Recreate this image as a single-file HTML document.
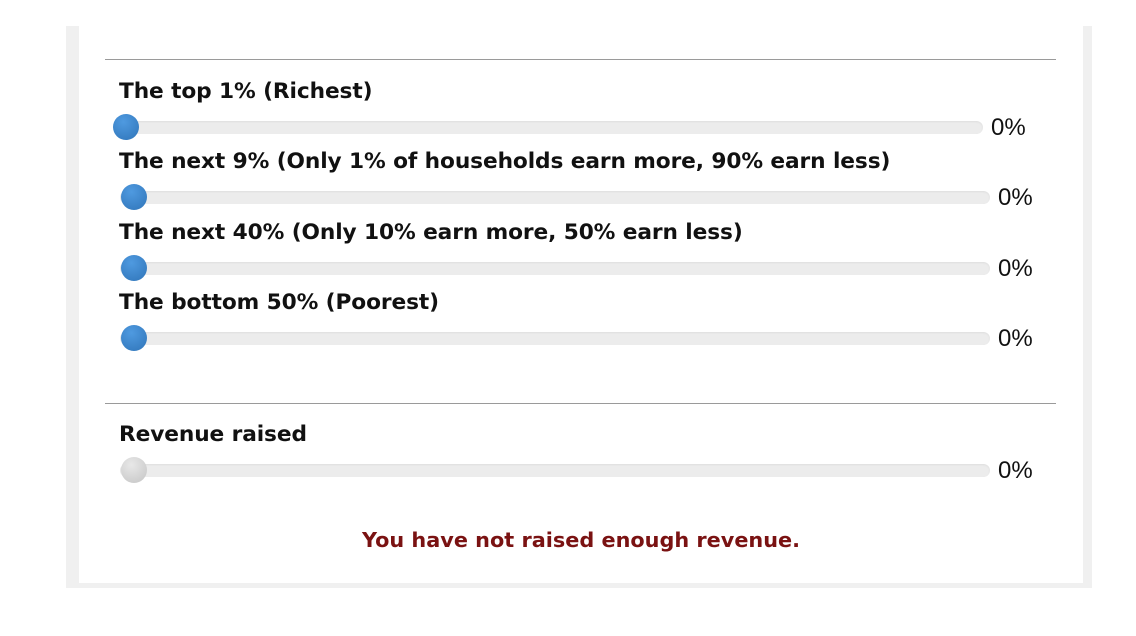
<!DOCTYPE html>
<html><head><style>
body{margin:0;width:1136px;height:636px;background:#fff;position:relative;overflow:hidden;font-family:"DejaVu Sans","Liberation Sans",sans-serif}
.box{position:absolute;left:66px;top:26px;width:1026px;height:562px;background:#f0f0f0}
.in{position:absolute;left:79px;top:26px;width:1004px;height:557px;background:#fff}
.hr{position:absolute;left:105px;width:951px;height:1px;background:#9a9a9a}
.lab{position:absolute;left:119px;font-weight:bold;font-size:21.7px;color:#111;line-height:24px;letter-spacing:-0.1px;white-space:nowrap}
.tr{position:absolute;left:120px;height:13px;border-radius:7px;background:#ececec;box-shadow:inset 0 1px 2px rgba(0,0,0,.06)}
.th{position:absolute;width:26px;height:26px;border-radius:50%;background:radial-gradient(circle at 40% 30%,#4f9ae0,#2f74b8)}
.th.g{background:radial-gradient(circle at 40% 30%,#e8e8e8,#c4c4c4)}
.pc{position:absolute;font-family:"Liberation Sans",sans-serif;font-size:24px;color:#111;line-height:24px}
.msg{position:absolute;left:79px;width:1004px;top:528px;text-align:center;font-weight:bold;font-size:20.8px;color:#7a1212}
</style></head><body>
<div class="box"></div><div class="in"></div>
<div class="hr" style="top:59px"></div>
<div class="lab" style="top:80px">The top 1% (Richest)</div>
<div class="tr" style="top:121px;width:863px"></div><div class="th" style="left:113px;top:114px"></div><div class="pc" style="left:991px;top:116px">0%</div>
<div class="lab" style="top:150px">The next 9% (Only 1% of households earn more, 90% earn less)</div>
<div class="tr" style="top:191px;width:870px"></div><div class="th" style="left:121px;top:184px"></div><div class="pc" style="left:998px;top:186px">0%</div>
<div class="lab" style="top:221px">The next 40% (Only 10% earn more, 50% earn less)</div>
<div class="tr" style="top:262px;width:870px"></div><div class="th" style="left:121px;top:255px"></div><div class="pc" style="left:998px;top:257px">0%</div>
<div class="lab" style="top:291px">The bottom 50% (Poorest)</div>
<div class="tr" style="top:332px;width:870px"></div><div class="th" style="left:121px;top:325px"></div><div class="pc" style="left:998px;top:327px">0%</div>
<div class="hr" style="top:403px"></div>
<div class="lab" style="top:423px">Revenue raised</div>
<div class="tr" style="top:464px;width:870px"></div><div class="th g" style="left:121px;top:457px"></div><div class="pc" style="left:998px;top:459px">0%</div>
<div class="msg">You have not raised enough revenue.</div>
</body></html>
